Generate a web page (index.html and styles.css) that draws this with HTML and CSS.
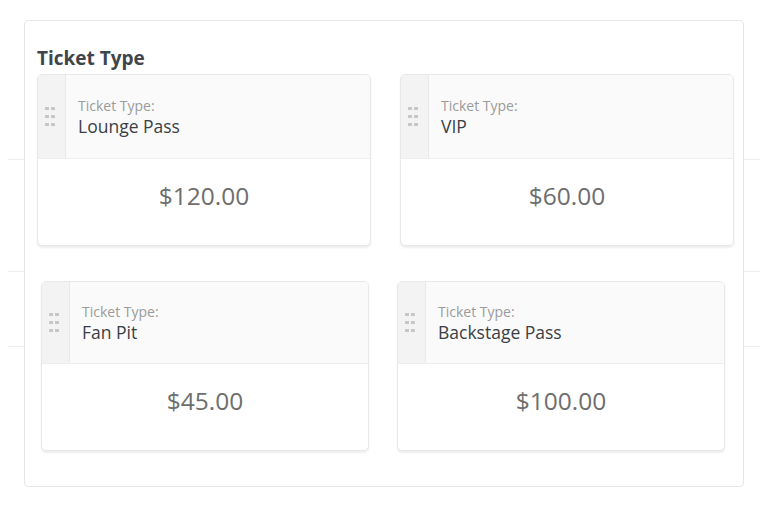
FILE: index.html
```html
<!DOCTYPE html>
<html lang="en">
<head>
  <meta charset="UTF-8">
  <title>Ticket Types</title>
  <meta name="viewport" content="width=device-width, initial-scale=1.0">
  <link rel="stylesheet" href="styles.css">
</head>
<body>

  <!-- LIST BEHIND THE PANEL -->
  <div class="rows">
    <div class="row row-first"></div>
    <div class="row row-second"></div>
    <div class="row row-third"></div>
  </div>

  <!-- TICKET TYPE PANEL -->
  <div class="panel">
    <h2 class="panel-title">Ticket Type</h2>

    <div class="card-row">
      <div class="ticket-card">
        <div class="card-head">
          <div class="handle">
            <svg width="10" height="19" viewBox="0 0 10 19"><rect x="0" y="0" width="4" height="3" rx="0.5"/><rect x="6" y="0" width="4" height="3" rx="0.5"/><rect x="0" y="8" width="4" height="3" rx="0.5"/><rect x="6" y="8" width="4" height="3" rx="0.5"/><rect x="0" y="16" width="4" height="3" rx="0.5"/><rect x="6" y="16" width="4" height="3" rx="0.5"/></svg>
          </div>
          <div class="card-info">
            <div class="card-label">Ticket Type:</div>
            <div class="card-name">Lounge Pass</div>
          </div>
        </div>
        <div class="card-price">$120.00</div>
      </div>

      <div class="ticket-card">
        <div class="card-head">
          <div class="handle">
            <svg width="10" height="19" viewBox="0 0 10 19"><rect x="0" y="0" width="4" height="3" rx="0.5"/><rect x="6" y="0" width="4" height="3" rx="0.5"/><rect x="0" y="8" width="4" height="3" rx="0.5"/><rect x="6" y="8" width="4" height="3" rx="0.5"/><rect x="0" y="16" width="4" height="3" rx="0.5"/><rect x="6" y="16" width="4" height="3" rx="0.5"/></svg>
          </div>
          <div class="card-info">
            <div class="card-label">Ticket Type:</div>
            <div class="card-name">VIP</div>
          </div>
        </div>
        <div class="card-price">$60.00</div>
      </div>
    </div>

    <div class="card-row card-row-small">
      <div class="ticket-card">
        <div class="card-head">
          <div class="handle">
            <svg width="10" height="19" viewBox="0 0 10 19"><rect x="0" y="0" width="4" height="3" rx="0.5"/><rect x="6" y="0" width="4" height="3" rx="0.5"/><rect x="0" y="8" width="4" height="3" rx="0.5"/><rect x="6" y="8" width="4" height="3" rx="0.5"/><rect x="0" y="16" width="4" height="3" rx="0.5"/><rect x="6" y="16" width="4" height="3" rx="0.5"/></svg>
          </div>
          <div class="card-info">
            <div class="card-label">Ticket Type:</div>
            <div class="card-name">Fan Pit</div>
          </div>
        </div>
        <div class="card-price">$45.00</div>
      </div>

      <div class="ticket-card">
        <div class="card-head">
          <div class="handle">
            <svg width="10" height="19" viewBox="0 0 10 19"><rect x="0" y="0" width="4" height="3" rx="0.5"/><rect x="6" y="0" width="4" height="3" rx="0.5"/><rect x="0" y="8" width="4" height="3" rx="0.5"/><rect x="6" y="8" width="4" height="3" rx="0.5"/><rect x="0" y="16" width="4" height="3" rx="0.5"/><rect x="6" y="16" width="4" height="3" rx="0.5"/></svg>
          </div>
          <div class="card-info">
            <div class="card-label">Ticket Type:</div>
            <div class="card-name">Backstage Pass</div>
          </div>
        </div>
        <div class="card-price">$100.00</div>
      </div>
    </div>
  </div>

</body>
</html>
```

FILE: styles.css
```css
body {
  font-family: "Open Sans", Arial, sans-serif;
  background: #ffffff;
  margin: 0;
  padding: 0;
}

/* --- LIST BEHIND --- */
.rows {
  margin: 0 8px;
  padding-top: 159px;
}

.row {
  border-top: 1px solid #eeeeee;
}

.row-first {
  height: 111px;
}

.row-second {
  height: 74px;
}

/* --- PANEL --- */
.panel {
  position: absolute;
  top: 20px;
  left: 24px;
  width: 720px;
  height: 467px;
  box-sizing: border-box;
  background: #ffffff;
  border: 1px solid #e6e6e6;
  border-radius: 4px;
  padding: 24px 0 0 12px;
}

.panel-title {
  margin: 0 0 3px 0;
  font-size: 19px;
  line-height: 26px;
  font-weight: 700;
  color: #40454b;
}

.card-row {
  display: flex;
  gap: 29px;
}

.card-row-small {
  margin: 35px 0 0 4px;
  gap: 28px;
}

/* --- CARDS --- */
.ticket-card {
  width: 334px;
  flex-shrink: 0;
  box-sizing: border-box;
  border: 1px solid #e8e8e8;
  border-radius: 5px;
  background: #ffffff;
  box-shadow: 0 2px 2px rgba(0, 0, 0, 0.07);
  overflow: hidden;
}

.card-row-small .ticket-card {
  width: 328px;
}

.card-head {
  display: flex;
  height: 84px;
  box-sizing: border-box;
  background: #fafafa;
  border-bottom: 1px solid #eeeeee;
}

.card-row-small .card-head {
  height: 82px;
}

.handle {
  width: 28px;
  box-sizing: border-box;
  padding-left: 7px;
  display: flex;
  align-items: center;
  background: #f3f3f3;
  border-right: 1px solid #e9e9e9;
}

.handle svg {
  fill: #c6c6c6;
}

.card-info {
  display: flex;
  flex-direction: column;
  justify-content: center;
  padding-left: 12px;
}

.card-label {
  font-size: 14px;
  line-height: 19px;
  color: #9b9b9b;
}

.card-name {
  font-size: 17.5px;
  line-height: 23px;
  font-weight: 500;
  color: #3a3f45;
}

.card-price {
  height: 86px;
  box-sizing: border-box;
  padding-top: 21px;
  text-align: center;
  font-size: 24.5px;
  line-height: 32px;
  font-weight: 500;
  color: #6e6e6e;
}
```
